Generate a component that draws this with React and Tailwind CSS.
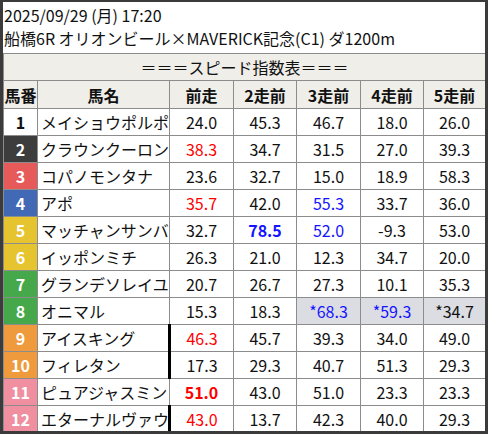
import React from "react";

const numColors = {
  1: "bg-white text-[#111]",
  2: "bg-[#3d3d3d] text-white",
  3: "bg-[#e65a5a] text-white",
  4: "bg-[#4169b6] text-white",
  5: "bg-[#e6c430] text-white",
  6: "bg-[#e6c430] text-white",
  7: "bg-[#45a94b] text-white",
  8: "bg-[#45a94b] text-white",
  9: "bg-[#ef9a3d] text-white",
  10: "bg-[#ef9a3d] text-white",
  11: "bg-[#ef8fa0] text-white",
  12: "bg-[#ef8fa0] text-white",
};

// r = red, R = bold red, b = blue, B = bold blue, g = gray cell
const rows = [
  [1, "メイショウポルポ", ["24.0", "45.3", "46.7", "18.0", "26.0"]],
  [2, "クラウンクーロン", ["r38.3", "34.7", "31.5", "27.0", "39.3"]],
  [3, "コパノモンタナ", ["23.6", "32.7", "15.0", "18.9", "58.3"]],
  [4, "アポ", ["r35.7", "42.0", "b55.3", "33.7", "36.0"]],
  [5, "マッチャンサンバ", ["32.7", "B78.5", "b52.0", "-9.3", "53.0"]],
  [6, "イッポンミチ", ["26.3", "21.0", "12.3", "34.7", "20.0"]],
  [7, "グランデソレイユ", ["20.7", "26.7", "27.3", "10.1", "35.3"]],
  [8, "オニマル", ["15.3", "18.3", "gb*68.3", "gb*59.3", "g*34.7"]],
  [9, "アイスキング", ["r46.3", "45.7", "39.3", "34.0", "49.0"], true],
  [10, "フィレタン", ["17.3", "29.3", "40.7", "51.3", "29.3"], true],
  [11, "ピュアジャスミン", ["R51.0", "43.0", "51.0", "23.3", "23.3"]],
  [12, "エターナルヴァウ", ["r43.0", "13.7", "42.3", "40.0", "29.3"], true],
];

function Cell({ raw, thick }) {
  let v = raw;
  let cls = "text-[#111]";
  let bg = "";
  if (v.startsWith("g")) {
    bg = "bg-[#dcdde2]";
    v = v.slice(1);
  }
  if (v.startsWith("r")) {
    cls = "text-[#ff0000]";
    v = v.slice(1);
  } else if (v.startsWith("R")) {
    cls = "text-[#ff0000] font-bold";
    v = v.slice(1);
  } else if (v.startsWith("b")) {
    cls = "text-[#1414ff]";
    v = v.slice(1);
  } else if (v.startsWith("B")) {
    cls = "text-[#1414ff] font-bold";
    v = v.slice(1);
  }
  return (
    <td
      className={`border border-[#8c8c8c] text-center ${bg} ${cls} ${
        thick ? "border-l-[3px] border-l-black" : ""
      }`}
    >
      {v}
    </td>
  );
}

export default function App() {
  const heads = ["前走", "2走前", "3走前", "4走前", "5走前"];

  return (
    <div
      className="w-[488px] h-[434px] overflow-hidden bg-white border-x-[3px] border-t-2 border-b-[3px] border-[#3b3b3b] text-[#111]"
      style={{ fontFamily: '"Noto Sans CJK JP", "Noto Sans", sans-serif' }}
    >
      <div className="pt-[2px] pl-px text-[16px] leading-[23px]">
        <div>2025/09/29 (月) 17:20</div>
        <div>船橋6R オリオンビール×MAVERICK記念(C1) ダ1200m</div>
      </div>

      <table className="mt-[3px] w-[482px] table-fixed border-collapse text-[16px]">
        <colgroup>
          <col className="w-[34px]" />
          <col className="w-[132px]" />
          <col className="w-[64px]" />
          <col className="w-[63px]" />
          <col className="w-[64px]" />
          <col className="w-[63px]" />
          <col className="w-[62px]" />
        </colgroup>
        <thead>
          <tr className="h-[27px] bg-[#efeee9]">
            <th colSpan={7} className="border border-[#8c8c8c] font-normal text-center">
              ＝＝＝スピード指数表＝＝＝
            </th>
          </tr>
          <tr className="h-[28px] bg-[#efeee9]">
            <th className="border border-[#8c8c8c] font-bold">馬番</th>
            <th className="border border-[#8c8c8c] font-bold">馬名</th>
            {heads.map((h) => (
              <th key={h} className="border border-[#8c8c8c] font-bold">
                {h}
              </th>
            ))}
          </tr>
        </thead>
        <tbody>
          {rows.map(([no, name, vals, thick]) => (
            <tr key={no} className="h-[27px]">
              <td className={`border border-[#8c8c8c] text-center font-bold ${numColors[no]}`}>
                {no}
              </td>
              <td className="border border-[#8c8c8c] pl-[3px] whitespace-nowrap overflow-hidden">
                {name}
              </td>
              {vals.map((v, i) => (
                <Cell key={i} raw={v} thick={thick && i === 0} />
              ))}
            </tr>
          ))}
        </tbody>
      </table>
    </div>
  );
}
